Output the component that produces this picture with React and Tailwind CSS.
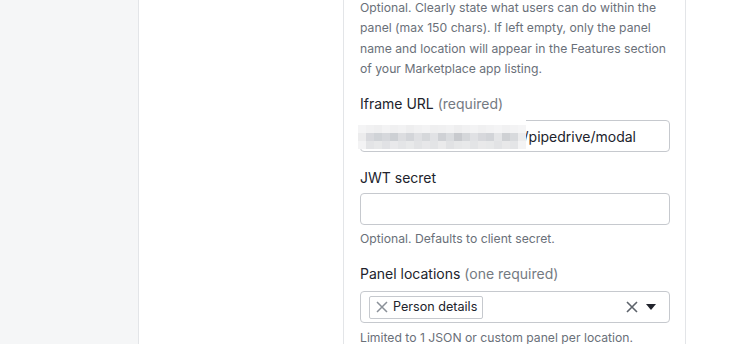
import React from "react";

const blurRows = [
  ["#f4f4f5", "#f1f1f2", "#efeff0", "#f3f3f4", "#f0f0f1", "#f2f2f3", "#eeeeef", "#f1f1f2", "#f3f3f4", "#efeff0", "#f0f0f1", "#f2f2f3", "#eeeeef", "#f1f1f2", "#f3f3f4", "#f0f0f1", "#f2f2f3", "#f4f4f5", "#f1f1f2", "#f3f3f4", "#f5f5f6"],
  ["#ececed", "#d8d9dd", "#d0d3d7", "#d6d8dc", "#cdd0d4", "#dcdde0", "#d3d5d9", "#dfe0e3", "#d6d8db", "#e1e2e5", "#cfd1d5", "#dadcdf", "#c8cace", "#d5d7da", "#e0e1e4", "#d7d8dc", "#d2d4d8", "#e4e5e7", "#cfd1d4", "#d8dadd", "#ececed"],
  ["#f3f3f4", "#e3e4e6", "#e7e8e9", "#e1e2e5", "#e9e9eb", "#e4e5e7", "#e8e9ea", "#e2e3e5", "#e7e7e9", "#e3e4e6", "#eaeaeb", "#e1e2e4", "#e6e7e8", "#e8e9ea", "#e3e4e6", "#e9e9ea", "#e7e8e9", "#e2e3e5", "#e8e8e9", "#e4e5e7", "#f3f3f4"],
];

function Field({ label, hint, gap = "mt-[6px]", children }) {
    return (
        <div className="flex flex-col">
            <label className="text-[14px] leading-5 text-[#21232c]">
                {label}
                {hint && <span className="text-[#747a82]"> {hint}</span>}
            </label>
            <div className={gap}>{children}</div>
        </div>
    );
}

export default function App() {
    return (
        <div
            className="w-[755px] h-[344px] overflow-hidden flex bg-white"
            style={{ fontFamily: "Inter, 'Noto Sans', sans-serif" }}
        >
            {/* left sidebar strip */}
            <div className="w-[139px] shrink-0 bg-[#f5f6f7] border-r border-[#e3e5e8]"></div>

            {/* empty column */}
            <div className="w-[204px] shrink-0 bg-white"></div>

            {/* form panel */}
            <div className="w-[343px] shrink-0 border-l border-r border-[#e3e5e8] pl-[16px] pr-[15px] -mt-[2px]">
                <p className="text-[12.2px] leading-[20.3px] text-[#6a7079]">
                    Optional. Clearly state what users can do within the panel (max 150 chars). If left empty, only the panel name and location will appear in the Features section of your Marketplace app listing.
                </p>

                <div className="mt-[15px]">
                    <Field label="Iframe URL" hint="(required)">
                        <div className="relative h-[32px] rounded-[4px] border border-[#c6c9ce] flex items-center justify-end pr-[33px]">
                            <span className="text-[14px] text-[#21232c]">/pipedrive/modal</span>
                            <div className="absolute left-[-5px] top-[-2px] w-[170px] h-[30px] bg-white flex flex-col justify-end pl-[2px]">
                                {blurRows.map((row, i) => (
                                    <div key={i} className="flex h-[8px]">
                                        {row.map((c, j) => (
                                            <div key={j} className="w-[8px] h-[8px]" style={{ background: c }}></div>
                                        ))}
                                    </div>
                                ))}
                            </div>
                        </div>
                    </Field>
                </div>

                <div className="mt-[16px]">
                    <Field label="JWT secret" gap="mt-[5px]">
                        <div className="h-[32px] rounded-[4px] border border-[#c6c9ce] bg-white"></div>
                    </Field>
                    <p className="mt-[4px] text-[12.2px] leading-5 text-[#6a7079]">Optional. Defaults to client secret.</p>
                </div>

                <div className="mt-[15px]">
                    <Field label="Panel locations" hint="(one required)" gap="mt-[7px]">
                        <div className="h-[32px] rounded-[4px] border border-[#c6c9ce] flex items-center pl-[8px] pr-[13px]">
                            <div className="h-[23px] flex items-center gap-[5px] border border-[#c6c9ce] rounded-[2px] pl-[6px] pr-[5px]">
                                <svg width="12" height="12" viewBox="0 0 12 12" className="text-[#8a9098]">
                                    <path d="M1 1 L11 11 M11 1 L1 11" stroke="currentColor" strokeWidth="1.5" fill="none" />
                                </svg>
                                <span className="text-[12.6px] text-[#21232c]">Person details</span>
                            </div>
                            <div className="ml-auto flex items-center gap-[8px]">
                                <svg width="12" height="12" viewBox="0 0 12 12" className="text-[#5d636b]">
                                    <path d="M1 1 L11 11 M11 1 L1 11" stroke="currentColor" strokeWidth="1.6" fill="none" />
                                </svg>
                                <svg width="10" height="6" viewBox="0 0 10 6" className="text-[#21232c]">
                                    <path d="M0 0 H10 L5 6 Z" fill="currentColor" />
                                </svg>
                            </div>
                        </div>
                    </Field>
                    <p className="mt-[5px] text-[12.2px] leading-5 text-[#6a7079]">Limited to 1 JSON or custom panel per location.</p>
                </div>
            </div>

            <div className="flex-1 bg-white"></div>
        </div>
    );
}
